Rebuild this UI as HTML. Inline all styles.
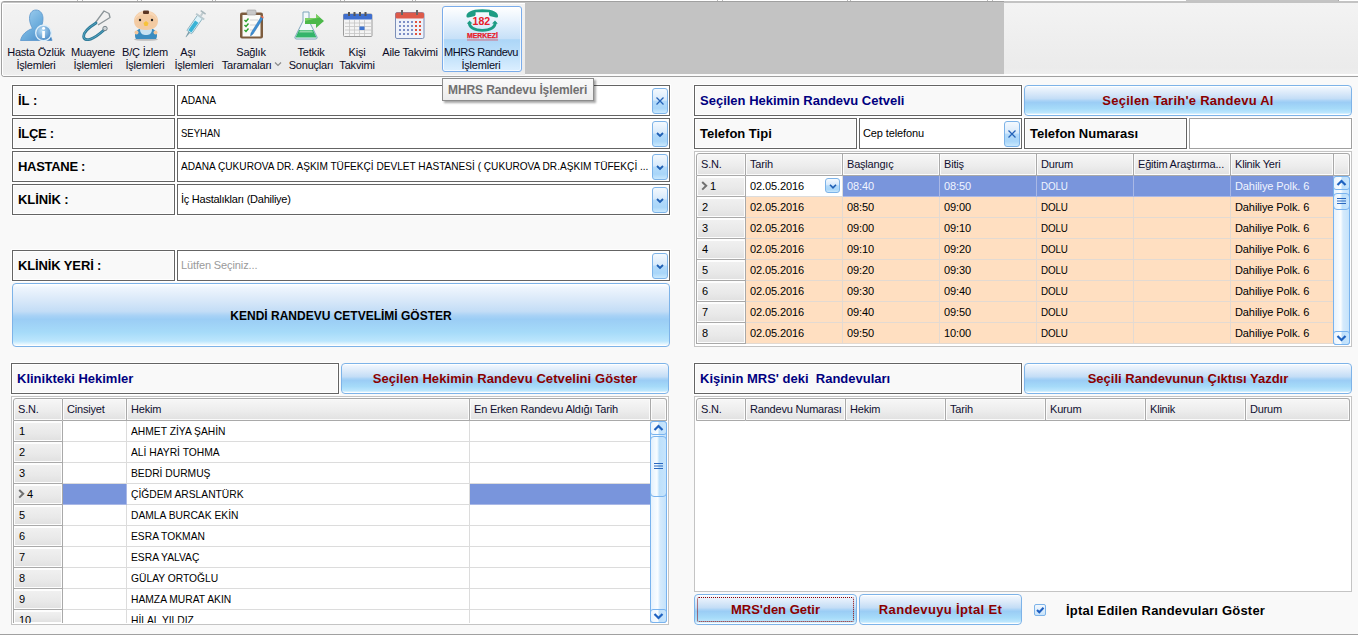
<!DOCTYPE html><html><head><meta charset="utf-8"><title>MHRS</title><style>
*{margin:0;padding:0;box-sizing:border-box}
html,body{width:1358px;height:636px;overflow:hidden;background:#f9f9f9;font-family:"Liberation Sans",sans-serif;font-size:11px;color:#000;position:relative}
.ab{position:absolute}
.t{position:absolute;white-space:nowrap;line-height:13px}
.lbl{position:absolute;background:#f9f9f9;border:1px solid #646464;box-shadow:0 0 0 1px #fff, inset 0 0 0 1px #fff}
.val{position:absolute;background:#fff;border:1px solid #646464;box-shadow:0 0 0 1px #fff}
.lt{position:absolute;font-weight:bold;font-size:13px;line-height:15px;white-space:nowrap;color:#000}
.vt{position:absolute;font-size:11px;line-height:13px;white-space:nowrap;color:#000;letter-spacing:-0.2px}
.btn{position:absolute;border:1px solid #7db3e8;border-radius:4px;
 background:linear-gradient(to bottom,#ffffff 0%,#eef5fd 6%,#dae9f9 25%,#c3ddf6 44%,#a8d2f6 51%,#9bcdf5 57%,#a6dbf9 78%,#bce6fd 92%,#e4f6fe 97%,#ffffff 100%);
 box-shadow:inset 0 1px 0 rgba(255,255,255,.8), inset 0 -1px 0 rgba(255,255,255,.8)}
.bt{position:absolute;left:0;right:0;text-align:center;font-weight:bold;font-size:13px;color:#8b0000;white-space:nowrap}
.sbtn{position:absolute;border:1px solid #7db3e8;border-radius:3px;
 background:linear-gradient(to bottom,#f4f9fe 0%,#d8eafb 45%,#b3dafa 52%,#a9d6f9 80%,#c9e8fd 100%)}
.grid{position:absolute;background:#fff;border:1px solid #c4c4c4;box-shadow:inset 0 0 0 1px #fff}
.hc{position:absolute;height:22px;padding:1px 1px 1px 1px;background:linear-gradient(to bottom,#f6f6f6 0%,#ececec 60%,#e2e2e2 100%) content-box,#fbfbfb;border-right:1px solid #a9a9a9;border-bottom:1px solid #a9a9a9}
.ht{position:absolute;left:4px;top:4px;font-size:11px;line-height:13px;color:#101030;white-space:nowrap;letter-spacing:-0.2px}
.rh{position:absolute;padding:2px 1px 1px 1px;background:linear-gradient(to bottom,#f0f0f0 0%,#e9e9e9 60%,#e1e1e1 100%) content-box,#fdfdfd;border-right:1px solid #a9a9a9;border-bottom:1px solid #a9a9a9}
.cell{position:absolute;border-right:1px solid #dcdcdc;border-bottom:1px solid #dcdcdc}
.ct{position:absolute;left:4px;top:4px;font-size:11px;line-height:13px;white-space:nowrap;color:#000;letter-spacing:-0.1px}
.rb{position:absolute;font-weight:bold;font-size:13px;color:#000080;white-space:nowrap}
</style></head><body>
<div class="ab" style="left:0;top:0;width:1358px;height:1px;background:#fff"></div>
<div class="ab" style="left:1px;top:1px;width:1370px;height:76px;border:1px solid #a0a0a0;border-radius:3px 0 0 3px;background:linear-gradient(to bottom,#f3f3f3 0%,#eeeeee 55%,#ebebeb 90%,#efefef 100%)"></div>
<div class="ab" style="left:3px;top:2px;width:1360px;height:1px;background:#c4c4c4"></div>
<div class="ab" style="left:3px;top:3px;width:1360px;height:1px;background:#fff"></div>
<div class="ab" style="left:2px;top:4px;width:1px;height:71px;background:#fff"></div>
<div class="ab" style="left:3px;top:75px;width:1360px;height:1px;background:#fbfbfb"></div>
<div class="ab" style="left:77px;top:0;width:1px;height:1px;background:#b8b8b8"></div>
<div class="ab" style="left:82px;top:0;width:1px;height:1px;background:#b8b8b8"></div>
<div class="ab" style="left:137px;top:0;width:1px;height:1px;background:#b8b8b8"></div>
<div class="ab" style="left:141px;top:0;width:1px;height:1px;background:#b8b8b8"></div>
<div class="ab" style="left:212px;top:0;width:1px;height:1px;background:#b8b8b8"></div>
<div class="ab" style="left:215px;top:0;width:1px;height:1px;background:#b8b8b8"></div>
<div class="ab" style="left:340px;top:0;width:1px;height:1px;background:#b8b8b8"></div>
<div class="ab" style="left:344px;top:0;width:1px;height:1px;background:#b8b8b8"></div>
<div class="ab" style="left:412px;top:0;width:1px;height:1px;background:#b8b8b8"></div>
<div class="ab" style="left:415px;top:0;width:1px;height:1px;background:#b8b8b8"></div>
<div class="ab" style="left:717px;top:0;width:1px;height:1px;background:#b8b8b8"></div>
<div class="ab" style="left:722px;top:0;width:1px;height:1px;background:#b8b8b8"></div>
<div class="ab" style="left:847px;top:0;width:1px;height:1px;background:#b8b8b8"></div>
<div class="ab" style="left:850px;top:0;width:1px;height:1px;background:#b8b8b8"></div>
<div class="ab" style="left:987px;top:0;width:1px;height:1px;background:#b8b8b8"></div>
<div class="ab" style="left:992px;top:0;width:1px;height:1px;background:#b8b8b8"></div>
<div class="ab" style="left:1190px;top:0;width:1px;height:1px;background:#b8b8b8"></div>
<div class="ab" style="left:1186px;top:0;width:152px;height:3px;background:#c4c4c4"></div>
<div class="ab" style="left:1338px;top:-2px;width:30px;height:4px;background:#fff;border:1px solid #a8a8a8"></div>
<div class="ab" style="left:525px;top:2px;width:479px;height:72px;background:#c3c3c3"></div>
<div class="ab" style="left:1004px;top:3px;width:354px;height:72px;background:linear-gradient(to bottom,#f3f3f3 0%,#eeeeee 55%,#ebebeb 90%,#efefef 100%)"></div>
<div class="ab" style="left:1004px;top:1px;width:354px;height:2px;background:#c3c3c3"></div>
<div class="ab" style="left:1004px;top:74px;width:354px;height:1px;background:#fff"></div>
<div class="ab" style="left:525px;top:74px;width:479px;height:1px;background:#fafafa"></div>
<div class="ab" style="left:442px;top:6px;width:80px;height:66px;border:1px solid #7aacea;border-radius:3px;background:linear-gradient(to bottom,#ffffff 0%,#e4f0fc 25%,#c6e0f8 50%,#acd6f7 51%,#bfe0fa 75%,#dcefff 100%);box-shadow:inset 0 0 0 1px rgba(255,255,255,.7)"></div>
<div class="t" style="left:-24px;top:46px;width:120px;text-align:center;color:#0a0a24;letter-spacing:-0.2px">Hasta Özlük</div>
<div class="t" style="left:-24px;top:59px;width:120px;text-align:center;color:#0a0a24;letter-spacing:-0.2px">İşlemleri</div>
<div class="t" style="left:33px;top:46px;width:120px;text-align:center;color:#0a0a24;letter-spacing:-0.2px">Muayene</div>
<div class="t" style="left:33px;top:59px;width:120px;text-align:center;color:#0a0a24;letter-spacing:-0.2px">İşlemleri</div>
<div class="t" style="left:85px;top:46px;width:120px;text-align:center;color:#0a0a24;letter-spacing:-0.2px">B/Ç İzlem</div>
<div class="t" style="left:85px;top:59px;width:120px;text-align:center;color:#0a0a24;letter-spacing:-0.2px">İşlemleri</div>
<div class="t" style="left:128px;top:46px;width:120px;text-align:center;color:#0a0a24;letter-spacing:-0.2px">Aşı</div>
<div class="t" style="left:134px;top:59px;width:120px;text-align:center;color:#0a0a24;letter-spacing:-0.2px">İşlemleri</div>
<div class="t" style="left:191px;top:46px;width:120px;text-align:center;color:#0a0a24;letter-spacing:-0.2px">Sağlık</div>
<div class="t" style="left:191px;top:59px;width:120px;text-align:center;color:#0a0a24;letter-spacing:-0.2px">Taramaları&nbsp;&nbsp;&nbsp;</div>
<svg class="ab" style="left:274px;top:61px" width="8" height="6"><path d="M1 1.5 L4 4.5 L7 1.5" stroke="#8a8a8a" stroke-width="1.2" fill="none"/></svg>
<div class="t" style="left:251px;top:46px;width:120px;text-align:center;color:#0a0a24;letter-spacing:-0.2px">Tetkik</div>
<div class="t" style="left:251px;top:59px;width:120px;text-align:center;color:#0a0a24;letter-spacing:-0.2px">Sonuçları</div>
<div class="t" style="left:297px;top:46px;width:120px;text-align:center;color:#0a0a24;letter-spacing:-0.2px">Kişi</div>
<div class="t" style="left:297px;top:59px;width:120px;text-align:center;color:#0a0a24;letter-spacing:-0.2px">Takvimi</div>
<div class="t" style="left:350px;top:46px;width:120px;text-align:center;color:#0a0a24;letter-spacing:-0.2px">Aile Takvimi</div>
<div class="t" style="left:421px;top:46px;width:120px;text-align:center;color:#0a0a24;letter-spacing:-0.45px">MHRS Randevu</div>
<div class="t" style="left:421px;top:59px;width:120px;text-align:center;color:#0a0a24;letter-spacing:-0.2px">İşlemleri</div>
<svg class="ab" style="left:19px;top:9px" width="34" height="33" viewBox="0 0 34 33">
<defs><linearGradient id="pg" x1="0" y1="0" x2="1" y2="1"><stop offset="0" stop-color="#a8d4f2"/><stop offset=".5" stop-color="#6eaedd"/><stop offset="1" stop-color="#3f7fbf"/></linearGradient>
<radialGradient id="ig" cx=".4" cy=".35" r=".75"><stop offset="0" stop-color="#b5dcf6"/><stop offset="1" stop-color="#3e80c0"/></radialGradient></defs>
<path d="M17 1 C12.5 1 10.5 5 10.5 9.5 C10.5 14 12.5 17.5 13.5 19.5 C8 21.5 3 25 1.5 31.5 L33 31.5 C32 26 28 22 21.5 19.5 C22.5 17.5 24 14 24 9.5 C24 5 21.5 1 17 1 Z" fill="url(#pg)" stroke="#5a96cc" stroke-width=".8"/>
<circle cx="24.5" cy="24" r="7.8" fill="url(#ig)" stroke="#dceefa" stroke-width="1.4"/>
<rect x="23.2" y="22" width="2.7" height="7" fill="#fff"/><circle cx="24.55" cy="19.3" r="1.5" fill="#fff"/>
</svg>
<svg class="ab" style="left:79px;top:9px" width="32" height="32" viewBox="0 0 32 32">
<path d="M16.5 13.5 L25 2 L30 4.5 L31 8.5 L19 16" fill="none" stroke="#8c9599" stroke-width="1.3" stroke-linejoin="round"/>
<path d="M17 14 C9 19 3 24 5 29 C7 32.5 14 31 25 21" fill="none" stroke="#2d7896" stroke-width="2.8" stroke-linecap="round"/>
<path d="M17 14 C9 19 3 24 5 29 C7 32.5 14 31 25 21" fill="none" stroke="#58aac6" stroke-width=".9" stroke-linecap="round"/>
<circle cx="26" cy="19.5" r="2.2" fill="#cdd3d6" stroke="#6e7c82" stroke-width=".9"/>
</svg>
<svg class="ab" style="left:132px;top:9px" width="28" height="32" viewBox="0 0 28 32">
<ellipse cx="14" cy="30.5" rx="12" ry="1.3" fill="#9a9a9a" opacity=".6"/>
<path d="M4 30 C2 27 3 22 7 20 L21 20 C25 22 26 27 24 30 Z" fill="#3a8cc0"/>
<path d="M8 20 L20 20 C20 25 17 26 14 26 C11 26 8 25 8 20Z" fill="#c6e2f2"/>
<circle cx="4.5" cy="23.5" r="2" fill="#f1c79d"/><circle cx="23.5" cy="23.5" r="2" fill="#f1c79d"/>
<path d="M14 2 C6 2 2 7 2 12 C2 18 7 21 14 21 C21 21 26 18 26 12 C26 7 22 2 14 2Z" fill="#f3cba3"/>
<path d="M14 2 C8 2 3 6 2.5 12 C5 7 9 5 14 5 C19 5 23 7 25.5 12 C25 6 20 2 14 2Z" fill="#f9dcbd" opacity=".7"/>
<rect x="11" y="1.5" width="6" height="3.5" rx="1" fill="#5a3422"/>
<circle cx="8" cy="11" r="1.2" fill="#222"/><circle cx="20" cy="11" r="1.2" fill="#222"/>
<path d="M11.5 14 L14 12 L16.5 14 L15.5 17 L12.5 17 Z" fill="#f7c23a"/>
</svg>
<svg class="ab" style="left:183px;top:9px" width="24" height="31" viewBox="0 0 24 31">
<g transform="rotate(35 12 15)">
<rect x="9" y="6" width="6" height="19" rx="1" fill="#dff3fa" stroke="#7fa9b8" stroke-width=".8"/>
<rect x="10" y="12" width="4" height="12" fill="#3ab3d6"/>
<rect x="7" y="5" width="10" height="2" fill="#b9c9cf"/>
<rect x="11" y="0" width="2" height="5" fill="#c0ccd0"/><rect x="9" y="0" width="6" height="1.5" fill="#aab8bd"/>
<path d="M11 25 L13 25 L12.3 31 L11.7 31Z" fill="#7ea0ac"/>
</g></svg>
<svg class="ab" style="left:239px;top:9px" width="26" height="31" viewBox="0 0 26 31">
<rect x="1" y="3.5" width="23" height="26" rx="2" fill="#7d5c3e"/>
<rect x="3.5" y="6" width="18" height="21.5" fill="#fbfbf8"/>
<rect x="8" y="1" width="9" height="5" rx="1" fill="#c9c9c9" stroke="#9a9a9a" stroke-width=".6"/>
<path d="M5.5 11 L7 12.5 L9.5 9.5 M5.5 16 L7 17.5 L9.5 14.5 M5.5 21 L7 22.5 L9.5 19.5" stroke="#2aa02a" stroke-width="1.4" fill="none"/>
<path d="M11 11 H19 M11 16 H17 M11 21 H15" stroke="#c8c8c8" stroke-width=".8"/>
<path d="M22 8 L12 24 L11.5 27 L14 25 L24 9.5Z" fill="#3d8fd6" stroke="#2f6ea6" stroke-width=".5"/>
<path d="M22 8 L24 9.5 L24.8 8 L22.8 6.6Z" fill="#e66a4a"/>
</svg>
<svg class="ab" style="left:294px;top:11px" width="31" height="29" viewBox="0 0 31 29">
<path d="M9 1 L15 1 L15 10 L23 26 C23.5 27.5 22.5 28 21 28 L3 28 C1.5 28 .5 27.5 1 26 L9 10 Z" fill="#f2f8fb" stroke="#7fa6bb" stroke-width="1"/>
<path d="M5 19 L19 19 L22.5 26.5 L1.5 26.5 Z" fill="#33b46a"/>
<path d="M6 19.5 L18 19.5 L19 21.5 L5 21.5Z" fill="#8fd8a8"/>
<path d="M11 7 L22 7 L22 3 L30 10 L22 17 L22 13 L11 13Z" fill="#4cb84a"/>
<path d="M11 7 L22 7 L22 3 L26 6.5 L11 10Z" fill="#8ad56a" opacity=".8"/>
</svg>
<svg class="ab" style="left:343px;top:12px" width="30" height="25" viewBox="0 0 30 25">
<rect x=".5" y="2" width="28.5" height="22.5" rx="1" fill="#f4f4f4" stroke="#9c9c9c" stroke-width="1"/>
<rect x=".5" y="2" width="28.5" height="5.5" rx="1" fill="#3f6fcf"/>
<g fill="#555"><rect x="5" y="0" width="2" height="4"/><rect x="10.5" y="0" width="2" height="4"/><rect x="16" y="0" width="2" height="4"/><rect x="21.5" y="0" width="2" height="4"/></g>
<g stroke="#c4c4c4" stroke-width=".8"><path d="M2 11H28M2 14.5H28M2 18H28M2 21.5H28M6.5 8V24M11.5 8V24M16.5 8V24M21.5 8V24"/></g>
<rect x="16.5" y="14.5" width="5" height="3.5" fill="#3f74d0"/>
</svg>
<svg class="ab" style="left:395px;top:10px" width="30" height="29" viewBox="0 0 30 29">
<rect x=".5" y="2.5" width="28.5" height="26" rx="1.5" fill="#eef2fa" stroke="#7c8fb8" stroke-width="1"/>
<rect x=".5" y="2.5" width="28.5" height="6" rx="1.5" fill="#dd5a4a"/>
<g fill="#666"><rect x="6" y="0" width="2" height="5"/><rect x="21" y="0" width="2" height="5"/></g>
<g fill="#7d8fc6">
<rect x="4" y="11" width="2" height="2"/><rect x="8" y="11" width="2" height="2"/><rect x="12" y="11" width="2" height="2"/><rect x="16" y="11" width="2" height="2"/>
<rect x="4" y="15" width="2" height="2"/><rect x="8" y="15" width="2" height="2"/><rect x="12" y="15" width="2" height="2"/><rect x="16" y="15" width="2" height="2"/>
<rect x="4" y="19" width="2" height="2"/><rect x="8" y="19" width="2" height="2"/><rect x="12" y="19" width="2" height="2"/><rect x="16" y="19" width="2" height="2"/>
<rect x="4" y="23" width="2" height="2"/><rect x="8" y="23" width="2" height="2"/><rect x="12" y="23" width="2" height="2"/><rect x="16" y="23" width="2" height="2"/></g>
<g fill="#e0533f"><rect x="20" y="11" width="2" height="2"/><rect x="24" y="11" width="2" height="2"/><rect x="20" y="15" width="2" height="2"/><rect x="24" y="15" width="2" height="2"/><rect x="20" y="19" width="2" height="2"/><rect x="24" y="19" width="2" height="2"/><rect x="20" y="23" width="2" height="2"/><rect x="24" y="23" width="2" height="2"/></g>
</svg>
<svg class="ab" style="left:462px;top:6px" width="40" height="38" viewBox="0 0 40 38">
<path d="M4.5 10.5 C4 6.5 9 3.2 20.3 3.2 C31.5 3.2 36.5 6.5 36 10.5 C36 11.5 35 11.8 34 11.5 L28.5 10.2 C27.5 10 27 9.2 27 8.5 L27 6.2 L13.6 6.2 L13.6 8.5 C13.6 9.2 13 10 12 10.2 L6.5 11.5 C5.5 11.8 4.6 11.5 4.5 10.5Z" fill="#1d9c84"/>
<path d="M7.2 16.5 C7.5 22 12 24.3 20.3 24.3 C28.5 24.3 33 22 33.3 16.5" fill="none" stroke="#1d9c84" stroke-width="2.8"/>
<path d="M4.8 17.8 L7.5 14.6 L10.5 17.5Z M30 17.5 L33 14.6 L35.8 17.8Z" fill="#1d9c84"/>
<text x="10.6" y="18.9" font-family="Liberation Sans" font-weight="bold" font-size="10.6" fill="#e8202a" textLength="17.6" lengthAdjust="spacingAndGlyphs">182</text>
<text x="5" y="31.8" font-family="Liberation Sans" font-weight="bold" font-size="6.3" fill="#e8202a" stroke="#e8202a" stroke-width=".25" textLength="31" lengthAdjust="spacingAndGlyphs">MERKEZİ</text>
<rect x="5" y="33.3" width="31" height="1.3" fill="#e8202a" opacity=".45"/>
</svg>
<div class="ab" style="left:442px;top:78px;width:152px;height:23px;background:linear-gradient(to bottom,#fafafa,#ececec);border:1px solid #8c8c8c;box-shadow:2px 2px 2px rgba(0,0,0,.35);z-index:5"></div>
<div class="t" style="left:448px;top:83px;font-weight:bold;font-size:12px;line-height:14px;color:#707070;z-index:6;letter-spacing:-0.1px">MHRS Randevu İşlemleri</div>
<div class="lbl" style="left:12px;top:85px;width:163px;height:31px"></div>
<div class="lt" style="left:18px;top:93px;letter-spacing:0px">İL :</div>
<div class="val" style="left:177px;top:85px;width:493px;height:31px"></div>
<div class="vt" style="left:181px;top:94px;letter-spacing:0;transform:scaleX(0.923);transform-origin:0 0">ADANA</div>
<div class="sbtn" style="left:652px;top:88px;width:16px;height:26px"></div>
<svg class="ab" style="left:655px;top:96px" width="10" height="10"><path d="M1.5 1.5 L8.5 8.5 M8.5 1.5 L1.5 8.5" stroke="#2563b8" stroke-width="1.3"/></svg>
<div class="lbl" style="left:12px;top:118px;width:163px;height:31px"></div>
<div class="lt" style="left:18px;top:126px;letter-spacing:-0.3px">İLÇE :</div>
<div class="val" style="left:177px;top:118px;width:493px;height:31px"></div>
<div class="vt" style="left:181px;top:127px;letter-spacing:0;transform:scaleX(0.868);transform-origin:0 0">SEYHAN</div>
<div class="sbtn" style="left:652px;top:121px;width:16px;height:26px"></div>
<svg class="ab" style="left:656px;top:132px" width="8" height="6"><path d="M1 1 L4 4 L7 1" stroke="#1f5fb4" stroke-width="1.8" fill="none"/></svg>
<div class="lbl" style="left:12px;top:151px;width:163px;height:31px"></div>
<div class="lt" style="left:18px;top:159px;letter-spacing:-0.3px">HASTANE :</div>
<div class="val" style="left:177px;top:151px;width:493px;height:31px"></div>
<div class="vt" style="left:181px;top:160px;letter-spacing:0;transform:scaleX(0.918);transform-origin:0 0">ADANA ÇUKUROVA DR. AŞKIM TÜFEKÇİ DEVLET HASTANESİ ( ÇUKUROVA DR.AŞKIM TÜFEKÇİ ...</div>
<div class="sbtn" style="left:652px;top:154px;width:16px;height:26px"></div>
<svg class="ab" style="left:656px;top:165px" width="8" height="6"><path d="M1 1 L4 4 L7 1" stroke="#1f5fb4" stroke-width="1.8" fill="none"/></svg>
<div class="lbl" style="left:12px;top:184px;width:163px;height:31px"></div>
<div class="lt" style="left:18px;top:192px;letter-spacing:-0.1px">KLİNİK :</div>
<div class="val" style="left:177px;top:184px;width:493px;height:31px"></div>
<div class="vt" style="left:181px;top:193px;letter-spacing:-0.25px">İç Hastalıkları (Dahiliye)</div>
<div class="sbtn" style="left:652px;top:187px;width:16px;height:26px"></div>
<svg class="ab" style="left:656px;top:198px" width="8" height="6"><path d="M1 1 L4 4 L7 1" stroke="#1f5fb4" stroke-width="1.8" fill="none"/></svg>
<div class="lbl" style="left:12px;top:250px;width:163px;height:31px"></div>
<div class="lt" style="left:18px;top:258px;letter-spacing:-0.13px">KLİNİK YERİ :</div>
<div class="val" style="left:177px;top:250px;width:493px;height:31px"></div>
<div class="vt" style="left:181px;top:259px;letter-spacing:-0.11px"><span style="color:#9a9a9a">Lütfen Seçiniz...</span></div>
<div class="sbtn" style="left:652px;top:253px;width:16px;height:26px"></div>
<svg class="ab" style="left:656px;top:264px" width="8" height="6"><path d="M1 1 L4 4 L7 1" stroke="#1f5fb4" stroke-width="1.8" fill="none"/></svg>
<div class="btn" style="left:12px;top:283px;width:658px;height:64px"></div>
<div class="bt" style="left:12px;width:658px;top:309px;color:#000;font-size:12px">KENDİ RANDEVU CETVELİMİ GÖSTER</div>
<div class="lbl" style="left:11px;top:363px;width:328px;height:31px"></div>
<div class="rb" style="left:17px;top:371px">Klinikteki Hekimler</div>
<div class="btn" style="left:341px;top:363px;width:328px;height:31px"></div>
<div class="bt" style="left:341px;width:328px;top:371px;letter-spacing:0.08px">Seçilen Hekimin Randevu Cetvelini Göster</div>
<div class="lbl" style="left:694px;top:85px;width:328px;height:31px"></div>
<div class="rb" style="left:700px;top:93px">Seçilen Hekimin Randevu Cetveli</div>
<div class="btn" style="left:1024px;top:85px;width:328px;height:31px"></div>
<div class="bt" style="left:1024px;width:328px;top:93px;letter-spacing:0.25px">Seçilen Tarih'e Randevu Al</div>
<div class="lbl" style="left:694px;top:118px;width:163px;height:31px"></div>
<div class="lt" style="left:700px;top:126px">Telefon Tipi</div>
<div class="val" style="left:859px;top:118px;width:163px;height:31px"></div>
<div class="vt" style="left:863px;top:127px;letter-spacing:-0.12px">Cep telefonu</div>
<div class="sbtn" style="left:1004px;top:121px;width:16px;height:26px"></div>
<svg class="ab" style="left:1007px;top:129px" width="10" height="10"><path d="M1.5 1.5 L8.5 8.5 M8.5 1.5 L1.5 8.5" stroke="#2563b8" stroke-width="1.3"/></svg>
<div class="lbl" style="left:1024px;top:118px;width:163px;height:31px"></div>
<div class="lt" style="left:1030px;top:126px">Telefon Numarası</div>
<div class="val" style="left:1189px;top:118px;width:163px;height:31px;border-color:#a0a0a0"></div>
<div class="lbl" style="left:694px;top:363px;width:328px;height:31px"></div>
<div class="rb" style="left:700px;top:371px">Kişinin MRS' deki&nbsp; Randevuları</div>
<div class="btn" style="left:1024px;top:363px;width:328px;height:31px"></div>
<div class="bt" style="left:1024px;width:328px;top:371px">Seçili Randevunun Çıktısı Yazdır</div>
<div class="btn" style="left:694px;top:594px;width:163px;height:31px"></div>
<div class="ab" style="left:697px;top:597px;width:157px;height:25px;border:1px dotted #8b0000;border-radius:2px"></div>
<div class="bt" style="left:694px;width:163px;top:602px">MRS'den Getir</div>
<div class="btn" style="left:859px;top:594px;width:163px;height:31px"></div>
<div class="bt" style="left:859px;width:163px;top:602px;letter-spacing:0.35px">Randevuyu İptal Et</div>
<div class="ab" style="left:1034px;top:604px;width:12px;height:12px;border:1px solid #7db3e8;border-radius:2px;background:linear-gradient(to bottom,#f2f8fe,#c9e4fb)"></div>
<svg class="ab" style="left:1035px;top:605px" width="10" height="10"><path d="M2 5 L4.3 7.3 L8.5 2.8" stroke="#1f5fc0" stroke-width="2" fill="none"/></svg>
<div class="lt" style="left:1066px;top:603px;font-size:13px;letter-spacing:0.2px">İptal Edilen Randevuları Göster</div>
<div class="ab" style="left:0;top:634px;width:1358px;height:1px;background:#a0a0a0"></div>
<div class="ab" style="left:0;top:635px;width:1358px;height:1px;background:#fff"></div>
<div class="grid" style="left:11px;top:396px;width:658px;height:229px"></div>
<div class="hc" style="left:13px;width:50px;border-left:1px solid #a9a9a9;border-top-left-radius:3px;top:398px;height:23px;border-top:1px solid #a9a9a9"><div class="ht">S.N.</div></div>
<div class="hc" style="left:63px;width:64px;top:398px;height:23px;border-top:1px solid #a9a9a9"><div class="ht">Cinsiyet</div></div>
<div class="hc" style="left:127px;width:343px;top:398px;height:23px;border-top:1px solid #a9a9a9"><div class="ht">Hekim</div></div>
<div class="hc" style="left:470px;width:181px;top:398px;height:23px;border-top:1px solid #a9a9a9"><div class="ht">En Erken Randevu Aldığı Tarih</div></div>
<div class="hc" style="left:651px;width:16px;border-top-right-radius:3px;top:398px;height:23px;border-top:1px solid #a9a9a9"><div class="ht"></div></div>
<div class="rh" style="left:13px;width:50px;border-left:1px solid #a9a9a9;top:421px;height:21px;overflow:hidden;"><div class="ct" style="left:5px">1</div></div>
<div class="cell" style="left:63px;width:64px;top:421px;height:21px;background:#fff;border-color:#dcdcdc;overflow:hidden;"><div class="ct" style="color:#000"></div></div>
<div class="cell" style="left:127px;width:343px;top:421px;height:21px;background:#fff;border-color:#dcdcdc;overflow:hidden;"><div class="ct" style="color:#000"><span style="display:inline-block;letter-spacing:0;transform:scaleX(0.935);transform-origin:0 0">AHMET ZİYA ŞAHİN</span></div></div>
<div class="cell" style="left:470px;width:181px;top:421px;height:21px;background:#fff;border-color:#dcdcdc;overflow:hidden;"><div class="ct" style="color:#000"></div></div>
<div class="rh" style="left:13px;width:50px;border-left:1px solid #a9a9a9;top:442px;height:21px;overflow:hidden;"><div class="ct" style="left:5px">2</div></div>
<div class="cell" style="left:63px;width:64px;top:442px;height:21px;background:#fff;border-color:#dcdcdc;overflow:hidden;"><div class="ct" style="color:#000"></div></div>
<div class="cell" style="left:127px;width:343px;top:442px;height:21px;background:#fff;border-color:#dcdcdc;overflow:hidden;"><div class="ct" style="color:#000"><span style="display:inline-block;letter-spacing:0;transform:scaleX(0.935);transform-origin:0 0">ALİ HAYRİ TOHMA</span></div></div>
<div class="cell" style="left:470px;width:181px;top:442px;height:21px;background:#fff;border-color:#dcdcdc;overflow:hidden;"><div class="ct" style="color:#000"></div></div>
<div class="rh" style="left:13px;width:50px;border-left:1px solid #a9a9a9;top:463px;height:21px;overflow:hidden;"><div class="ct" style="left:5px">3</div></div>
<div class="cell" style="left:63px;width:64px;top:463px;height:21px;background:#fff;border-color:#dcdcdc;overflow:hidden;"><div class="ct" style="color:#000"></div></div>
<div class="cell" style="left:127px;width:343px;top:463px;height:21px;background:#fff;border-color:#dcdcdc;overflow:hidden;"><div class="ct" style="color:#000"><span style="display:inline-block;letter-spacing:0;transform:scaleX(0.935);transform-origin:0 0">BEDRİ DURMUŞ</span></div></div>
<div class="cell" style="left:470px;width:181px;top:463px;height:21px;background:#fff;border-color:#dcdcdc;overflow:hidden;"><div class="ct" style="color:#000"></div></div>
<div class="rh" style="left:13px;width:50px;border-left:1px solid #a9a9a9;top:484px;height:21px;overflow:hidden;"><svg class="ab" style="left:4px;top:5px" width="8" height="10"><path d="M1.2 1 L5.2 4.8 L1.2 8.6" stroke="#707070" stroke-width="2" fill="none"/></svg><div class="ct" style="left:13px">4</div></div>
<div class="cell" style="left:63px;width:64px;top:484px;height:21px;background:#7995dc;border-color:#a9b8e6;overflow:hidden;"><div class="ct" style="color:#f0f4ff"></div></div>
<div class="cell" style="left:127px;width:343px;top:484px;height:21px;background:#fff;border-color:#dcdcdc;overflow:hidden;"><div class="ct" style="color:#000"><span style="display:inline-block;letter-spacing:0;transform:scaleX(0.935);transform-origin:0 0">ÇİĞDEM ARSLANTÜRK</span></div></div>
<div class="cell" style="left:470px;width:181px;top:484px;height:21px;background:#7995dc;border-color:#a9b8e6;overflow:hidden;"><div class="ct" style="color:#f0f4ff"></div></div>
<div class="rh" style="left:13px;width:50px;border-left:1px solid #a9a9a9;top:505px;height:21px;overflow:hidden;"><div class="ct" style="left:5px">5</div></div>
<div class="cell" style="left:63px;width:64px;top:505px;height:21px;background:#fff;border-color:#dcdcdc;overflow:hidden;"><div class="ct" style="color:#000"></div></div>
<div class="cell" style="left:127px;width:343px;top:505px;height:21px;background:#fff;border-color:#dcdcdc;overflow:hidden;"><div class="ct" style="color:#000"><span style="display:inline-block;letter-spacing:0;transform:scaleX(0.935);transform-origin:0 0">DAMLA BURCAK EKİN</span></div></div>
<div class="cell" style="left:470px;width:181px;top:505px;height:21px;background:#fff;border-color:#dcdcdc;overflow:hidden;"><div class="ct" style="color:#000"></div></div>
<div class="rh" style="left:13px;width:50px;border-left:1px solid #a9a9a9;top:526px;height:21px;overflow:hidden;"><div class="ct" style="left:5px">6</div></div>
<div class="cell" style="left:63px;width:64px;top:526px;height:21px;background:#fff;border-color:#dcdcdc;overflow:hidden;"><div class="ct" style="color:#000"></div></div>
<div class="cell" style="left:127px;width:343px;top:526px;height:21px;background:#fff;border-color:#dcdcdc;overflow:hidden;"><div class="ct" style="color:#000"><span style="display:inline-block;letter-spacing:0;transform:scaleX(0.935);transform-origin:0 0">ESRA TOKMAN</span></div></div>
<div class="cell" style="left:470px;width:181px;top:526px;height:21px;background:#fff;border-color:#dcdcdc;overflow:hidden;"><div class="ct" style="color:#000"></div></div>
<div class="rh" style="left:13px;width:50px;border-left:1px solid #a9a9a9;top:547px;height:21px;overflow:hidden;"><div class="ct" style="left:5px">7</div></div>
<div class="cell" style="left:63px;width:64px;top:547px;height:21px;background:#fff;border-color:#dcdcdc;overflow:hidden;"><div class="ct" style="color:#000"></div></div>
<div class="cell" style="left:127px;width:343px;top:547px;height:21px;background:#fff;border-color:#dcdcdc;overflow:hidden;"><div class="ct" style="color:#000"><span style="display:inline-block;letter-spacing:0;transform:scaleX(0.935);transform-origin:0 0">ESRA YALVAÇ</span></div></div>
<div class="cell" style="left:470px;width:181px;top:547px;height:21px;background:#fff;border-color:#dcdcdc;overflow:hidden;"><div class="ct" style="color:#000"></div></div>
<div class="rh" style="left:13px;width:50px;border-left:1px solid #a9a9a9;top:568px;height:21px;overflow:hidden;"><div class="ct" style="left:5px">8</div></div>
<div class="cell" style="left:63px;width:64px;top:568px;height:21px;background:#fff;border-color:#dcdcdc;overflow:hidden;"><div class="ct" style="color:#000"></div></div>
<div class="cell" style="left:127px;width:343px;top:568px;height:21px;background:#fff;border-color:#dcdcdc;overflow:hidden;"><div class="ct" style="color:#000"><span style="display:inline-block;letter-spacing:0;transform:scaleX(0.935);transform-origin:0 0">GÜLAY ORTOĞLU</span></div></div>
<div class="cell" style="left:470px;width:181px;top:568px;height:21px;background:#fff;border-color:#dcdcdc;overflow:hidden;"><div class="ct" style="color:#000"></div></div>
<div class="rh" style="left:13px;width:50px;border-left:1px solid #a9a9a9;top:589px;height:21px;overflow:hidden;"><div class="ct" style="left:5px">9</div></div>
<div class="cell" style="left:63px;width:64px;top:589px;height:21px;background:#fff;border-color:#dcdcdc;overflow:hidden;"><div class="ct" style="color:#000"></div></div>
<div class="cell" style="left:127px;width:343px;top:589px;height:21px;background:#fff;border-color:#dcdcdc;overflow:hidden;"><div class="ct" style="color:#000"><span style="display:inline-block;letter-spacing:0;transform:scaleX(0.935);transform-origin:0 0">HAMZA MURAT AKIN</span></div></div>
<div class="cell" style="left:470px;width:181px;top:589px;height:21px;background:#fff;border-color:#dcdcdc;overflow:hidden;"><div class="ct" style="color:#000"></div></div>
<div class="rh" style="left:13px;width:50px;border-left:1px solid #a9a9a9;top:610px;height:13px;overflow:hidden;border-bottom:0;"><div class="ct" style="left:5px">10</div></div>
<div class="cell" style="left:63px;width:64px;top:610px;height:13px;background:#fff;border-color:#dcdcdc;overflow:hidden;border-bottom:0;"><div class="ct" style="color:#000"></div></div>
<div class="cell" style="left:127px;width:343px;top:610px;height:13px;background:#fff;border-color:#dcdcdc;overflow:hidden;border-bottom:0;"><div class="ct" style="color:#000"><span style="display:inline-block;letter-spacing:0;transform:scaleX(0.935);transform-origin:0 0">HİLAL YILDIZ</span></div></div>
<div class="cell" style="left:470px;width:181px;top:610px;height:13px;background:#fff;border-color:#dcdcdc;overflow:hidden;border-bottom:0;"><div class="ct" style="color:#000"></div></div>
<div class="ab" style="left:650px;top:421px;width:17px;height:202px;border:1px solid #79b3ee;border-radius:3px;background:linear-gradient(to right,#e6f2fd,#fafdff 45%,#d5eafc 60%,#c5e3fb)"></div>
<div class="ab" style="left:650px;top:421px;width:17px;height:14px;border:1px solid #79b3ee;border-radius:3px;background:linear-gradient(to right,#eaf4fe,#fafdff 45%,#bfe0fb 55%,#c8e5fc)"></div>
<svg class="ab" style="left:653px;top:424px" width="11" height="8"><path d="M1.5 6 L5.5 2 L9.5 6" stroke="#1f62c0" stroke-width="2.2" fill="none"/></svg>
<div class="ab" style="left:650px;top:609px;width:17px;height:14px;border:1px solid #79b3ee;border-radius:3px;background:linear-gradient(to right,#eaf4fe,#fafdff 45%,#bfe0fb 55%,#c8e5fc)"></div>
<svg class="ab" style="left:653px;top:612px" width="11" height="8"><path d="M1.5 2 L5.5 6 L9.5 2" stroke="#1f62c0" stroke-width="2.2" fill="none"/></svg>
<div class="ab" style="left:650px;top:436px;width:17px;height:61px;border:1px solid #79b3ee;border-radius:4px;background:linear-gradient(to right,#e2f0fd,#f8fcff 40%,#bde0fb 55%,#c6e4fc)"></div>
<svg class="ab" style="left:654px;top:462px" width="9" height="8"><path d="M0 1.5H9M0 4H9M0 6.5H9" stroke="#2a68c0" stroke-width="1.1"/></svg>
<div class="grid" style="left:694px;top:151px;width:658px;height:196px"></div>
<div class="hc" style="left:696px;width:50px;border-left:1px solid #a9a9a9;border-top-left-radius:3px;top:153px;height:23px;border-top:1px solid #a9a9a9"><div class="ht">S.N.</div></div>
<div class="hc" style="left:746px;width:97px;top:153px;height:23px;border-top:1px solid #a9a9a9"><div class="ht">Tarih</div></div>
<div class="hc" style="left:843px;width:97px;top:153px;height:23px;border-top:1px solid #a9a9a9"><div class="ht">Başlangıç</div></div>
<div class="hc" style="left:940px;width:97px;top:153px;height:23px;border-top:1px solid #a9a9a9"><div class="ht">Bitiş</div></div>
<div class="hc" style="left:1037px;width:97px;top:153px;height:23px;border-top:1px solid #a9a9a9"><div class="ht">Durum</div></div>
<div class="hc" style="left:1134px;width:97px;top:153px;height:23px;border-top:1px solid #a9a9a9"><div class="ht">Eğitim Araştırma...</div></div>
<div class="hc" style="left:1231px;width:103px;top:153px;height:23px;border-top:1px solid #a9a9a9"><div class="ht">Klinik Yeri</div></div>
<div class="hc" style="left:1334px;width:16px;border-top-right-radius:3px;top:153px;height:23px;border-top:1px solid #a9a9a9"><div class="ht"></div></div>
<div class="rh" style="left:696px;width:50px;border-left:1px solid #a9a9a9;top:176px;height:21px;overflow:hidden;"><svg class="ab" style="left:4px;top:5px" width="8" height="10"><path d="M1.2 1 L5.2 4.8 L1.2 8.6" stroke="#707070" stroke-width="2" fill="none"/></svg><div class="ct" style="left:13px">1</div></div>
<div class="cell" style="left:746px;width:97px;top:176px;height:21px;background:#fff;border-color:#dcdcdc;overflow:hidden;"><div class="ct" style="color:#000">02.05.2016</div><div class="sbtn" style="left:79px;top:2px;width:15px;height:15px;border-radius:3px"></div><svg class="ab" style="left:83px;top:8px" width="8" height="5"><path d="M1 .8 L4 3.8 L7 .8" stroke="#1f5fb4" stroke-width="1.6" fill="none"/></svg></div>
<div class="cell" style="left:843px;width:97px;top:176px;height:21px;background:#7995dc;border-color:#a9b8e6;overflow:hidden;"><div class="ct" style="color:#f0f4ff">08:40</div></div>
<div class="cell" style="left:940px;width:97px;top:176px;height:21px;background:#7995dc;border-color:#a9b8e6;overflow:hidden;"><div class="ct" style="color:#f0f4ff">08:50</div></div>
<div class="cell" style="left:1037px;width:97px;top:176px;height:21px;background:#7995dc;border-color:#a9b8e6;overflow:hidden;"><div class="ct" style="color:#f0f4ff"><span style="display:inline-block;transform:scaleX(0.89);transform-origin:0 0">DOLU</span></div></div>
<div class="cell" style="left:1134px;width:97px;top:176px;height:21px;background:#7995dc;border-color:#a9b8e6;overflow:hidden;"><div class="ct" style="color:#f0f4ff"></div></div>
<div class="cell" style="left:1231px;width:103px;top:176px;height:21px;background:#7995dc;border-color:#a9b8e6;overflow:hidden;"><div class="ct" style="color:#f0f4ff">Dahiliye Polk. 6</div></div>
<div class="rh" style="left:696px;width:50px;border-left:1px solid #a9a9a9;top:197px;height:21px;overflow:hidden;"><div class="ct" style="left:5px">2</div></div>
<div class="cell" style="left:746px;width:97px;top:197px;height:21px;background:#ffdfc1;border-color:#e3dad2;overflow:hidden;"><div class="ct" style="color:#000">02.05.2016</div></div>
<div class="cell" style="left:843px;width:97px;top:197px;height:21px;background:#ffdfc1;border-color:#e3dad2;overflow:hidden;"><div class="ct" style="color:#000">08:50</div></div>
<div class="cell" style="left:940px;width:97px;top:197px;height:21px;background:#ffdfc1;border-color:#e3dad2;overflow:hidden;"><div class="ct" style="color:#000">09:00</div></div>
<div class="cell" style="left:1037px;width:97px;top:197px;height:21px;background:#ffdfc1;border-color:#e3dad2;overflow:hidden;"><div class="ct" style="color:#000"><span style="display:inline-block;transform:scaleX(0.89);transform-origin:0 0">DOLU</span></div></div>
<div class="cell" style="left:1134px;width:97px;top:197px;height:21px;background:#ffdfc1;border-color:#e3dad2;overflow:hidden;"><div class="ct" style="color:#000"></div></div>
<div class="cell" style="left:1231px;width:103px;top:197px;height:21px;background:#ffdfc1;border-color:#e3dad2;overflow:hidden;"><div class="ct" style="color:#000">Dahiliye Polk. 6</div></div>
<div class="rh" style="left:696px;width:50px;border-left:1px solid #a9a9a9;top:218px;height:21px;overflow:hidden;"><div class="ct" style="left:5px">3</div></div>
<div class="cell" style="left:746px;width:97px;top:218px;height:21px;background:#ffdfc1;border-color:#e3dad2;overflow:hidden;"><div class="ct" style="color:#000">02.05.2016</div></div>
<div class="cell" style="left:843px;width:97px;top:218px;height:21px;background:#ffdfc1;border-color:#e3dad2;overflow:hidden;"><div class="ct" style="color:#000">09:00</div></div>
<div class="cell" style="left:940px;width:97px;top:218px;height:21px;background:#ffdfc1;border-color:#e3dad2;overflow:hidden;"><div class="ct" style="color:#000">09:10</div></div>
<div class="cell" style="left:1037px;width:97px;top:218px;height:21px;background:#ffdfc1;border-color:#e3dad2;overflow:hidden;"><div class="ct" style="color:#000"><span style="display:inline-block;transform:scaleX(0.89);transform-origin:0 0">DOLU</span></div></div>
<div class="cell" style="left:1134px;width:97px;top:218px;height:21px;background:#ffdfc1;border-color:#e3dad2;overflow:hidden;"><div class="ct" style="color:#000"></div></div>
<div class="cell" style="left:1231px;width:103px;top:218px;height:21px;background:#ffdfc1;border-color:#e3dad2;overflow:hidden;"><div class="ct" style="color:#000">Dahiliye Polk. 6</div></div>
<div class="rh" style="left:696px;width:50px;border-left:1px solid #a9a9a9;top:239px;height:21px;overflow:hidden;"><div class="ct" style="left:5px">4</div></div>
<div class="cell" style="left:746px;width:97px;top:239px;height:21px;background:#ffdfc1;border-color:#e3dad2;overflow:hidden;"><div class="ct" style="color:#000">02.05.2016</div></div>
<div class="cell" style="left:843px;width:97px;top:239px;height:21px;background:#ffdfc1;border-color:#e3dad2;overflow:hidden;"><div class="ct" style="color:#000">09:10</div></div>
<div class="cell" style="left:940px;width:97px;top:239px;height:21px;background:#ffdfc1;border-color:#e3dad2;overflow:hidden;"><div class="ct" style="color:#000">09:20</div></div>
<div class="cell" style="left:1037px;width:97px;top:239px;height:21px;background:#ffdfc1;border-color:#e3dad2;overflow:hidden;"><div class="ct" style="color:#000"><span style="display:inline-block;transform:scaleX(0.89);transform-origin:0 0">DOLU</span></div></div>
<div class="cell" style="left:1134px;width:97px;top:239px;height:21px;background:#ffdfc1;border-color:#e3dad2;overflow:hidden;"><div class="ct" style="color:#000"></div></div>
<div class="cell" style="left:1231px;width:103px;top:239px;height:21px;background:#ffdfc1;border-color:#e3dad2;overflow:hidden;"><div class="ct" style="color:#000">Dahiliye Polk. 6</div></div>
<div class="rh" style="left:696px;width:50px;border-left:1px solid #a9a9a9;top:260px;height:21px;overflow:hidden;"><div class="ct" style="left:5px">5</div></div>
<div class="cell" style="left:746px;width:97px;top:260px;height:21px;background:#ffdfc1;border-color:#e3dad2;overflow:hidden;"><div class="ct" style="color:#000">02.05.2016</div></div>
<div class="cell" style="left:843px;width:97px;top:260px;height:21px;background:#ffdfc1;border-color:#e3dad2;overflow:hidden;"><div class="ct" style="color:#000">09:20</div></div>
<div class="cell" style="left:940px;width:97px;top:260px;height:21px;background:#ffdfc1;border-color:#e3dad2;overflow:hidden;"><div class="ct" style="color:#000">09:30</div></div>
<div class="cell" style="left:1037px;width:97px;top:260px;height:21px;background:#ffdfc1;border-color:#e3dad2;overflow:hidden;"><div class="ct" style="color:#000"><span style="display:inline-block;transform:scaleX(0.89);transform-origin:0 0">DOLU</span></div></div>
<div class="cell" style="left:1134px;width:97px;top:260px;height:21px;background:#ffdfc1;border-color:#e3dad2;overflow:hidden;"><div class="ct" style="color:#000"></div></div>
<div class="cell" style="left:1231px;width:103px;top:260px;height:21px;background:#ffdfc1;border-color:#e3dad2;overflow:hidden;"><div class="ct" style="color:#000">Dahiliye Polk. 6</div></div>
<div class="rh" style="left:696px;width:50px;border-left:1px solid #a9a9a9;top:281px;height:21px;overflow:hidden;"><div class="ct" style="left:5px">6</div></div>
<div class="cell" style="left:746px;width:97px;top:281px;height:21px;background:#ffdfc1;border-color:#e3dad2;overflow:hidden;"><div class="ct" style="color:#000">02.05.2016</div></div>
<div class="cell" style="left:843px;width:97px;top:281px;height:21px;background:#ffdfc1;border-color:#e3dad2;overflow:hidden;"><div class="ct" style="color:#000">09:30</div></div>
<div class="cell" style="left:940px;width:97px;top:281px;height:21px;background:#ffdfc1;border-color:#e3dad2;overflow:hidden;"><div class="ct" style="color:#000">09:40</div></div>
<div class="cell" style="left:1037px;width:97px;top:281px;height:21px;background:#ffdfc1;border-color:#e3dad2;overflow:hidden;"><div class="ct" style="color:#000"><span style="display:inline-block;transform:scaleX(0.89);transform-origin:0 0">DOLU</span></div></div>
<div class="cell" style="left:1134px;width:97px;top:281px;height:21px;background:#ffdfc1;border-color:#e3dad2;overflow:hidden;"><div class="ct" style="color:#000"></div></div>
<div class="cell" style="left:1231px;width:103px;top:281px;height:21px;background:#ffdfc1;border-color:#e3dad2;overflow:hidden;"><div class="ct" style="color:#000">Dahiliye Polk. 6</div></div>
<div class="rh" style="left:696px;width:50px;border-left:1px solid #a9a9a9;top:302px;height:21px;overflow:hidden;"><div class="ct" style="left:5px">7</div></div>
<div class="cell" style="left:746px;width:97px;top:302px;height:21px;background:#ffdfc1;border-color:#e3dad2;overflow:hidden;"><div class="ct" style="color:#000">02.05.2016</div></div>
<div class="cell" style="left:843px;width:97px;top:302px;height:21px;background:#ffdfc1;border-color:#e3dad2;overflow:hidden;"><div class="ct" style="color:#000">09:40</div></div>
<div class="cell" style="left:940px;width:97px;top:302px;height:21px;background:#ffdfc1;border-color:#e3dad2;overflow:hidden;"><div class="ct" style="color:#000">09:50</div></div>
<div class="cell" style="left:1037px;width:97px;top:302px;height:21px;background:#ffdfc1;border-color:#e3dad2;overflow:hidden;"><div class="ct" style="color:#000"><span style="display:inline-block;transform:scaleX(0.89);transform-origin:0 0">DOLU</span></div></div>
<div class="cell" style="left:1134px;width:97px;top:302px;height:21px;background:#ffdfc1;border-color:#e3dad2;overflow:hidden;"><div class="ct" style="color:#000"></div></div>
<div class="cell" style="left:1231px;width:103px;top:302px;height:21px;background:#ffdfc1;border-color:#e3dad2;overflow:hidden;"><div class="ct" style="color:#000">Dahiliye Polk. 6</div></div>
<div class="rh" style="left:696px;width:50px;border-left:1px solid #a9a9a9;top:323px;height:21px;overflow:hidden;"><div class="ct" style="left:5px">8</div></div>
<div class="cell" style="left:746px;width:97px;top:323px;height:21px;background:#ffdfc1;border-color:#e3dad2;overflow:hidden;"><div class="ct" style="color:#000">02.05.2016</div></div>
<div class="cell" style="left:843px;width:97px;top:323px;height:21px;background:#ffdfc1;border-color:#e3dad2;overflow:hidden;"><div class="ct" style="color:#000">09:50</div></div>
<div class="cell" style="left:940px;width:97px;top:323px;height:21px;background:#ffdfc1;border-color:#e3dad2;overflow:hidden;"><div class="ct" style="color:#000">10:00</div></div>
<div class="cell" style="left:1037px;width:97px;top:323px;height:21px;background:#ffdfc1;border-color:#e3dad2;overflow:hidden;"><div class="ct" style="color:#000"><span style="display:inline-block;transform:scaleX(0.89);transform-origin:0 0">DOLU</span></div></div>
<div class="cell" style="left:1134px;width:97px;top:323px;height:21px;background:#ffdfc1;border-color:#e3dad2;overflow:hidden;"><div class="ct" style="color:#000"></div></div>
<div class="cell" style="left:1231px;width:103px;top:323px;height:21px;background:#ffdfc1;border-color:#e3dad2;overflow:hidden;"><div class="ct" style="color:#000">Dahiliye Polk. 6</div></div>
<div class="ab" style="left:1333px;top:176px;width:17px;height:169px;border:1px solid #79b3ee;border-radius:3px;background:linear-gradient(to right,#e6f2fd,#fafdff 45%,#d5eafc 60%,#c5e3fb)"></div>
<div class="ab" style="left:1333px;top:176px;width:17px;height:14px;border:1px solid #79b3ee;border-radius:3px;background:linear-gradient(to right,#eaf4fe,#fafdff 45%,#bfe0fb 55%,#c8e5fc)"></div>
<svg class="ab" style="left:1336px;top:179px" width="11" height="8"><path d="M1.5 6 L5.5 2 L9.5 6" stroke="#1f62c0" stroke-width="2.2" fill="none"/></svg>
<div class="ab" style="left:1333px;top:331px;width:17px;height:14px;border:1px solid #79b3ee;border-radius:3px;background:linear-gradient(to right,#eaf4fe,#fafdff 45%,#bfe0fb 55%,#c8e5fc)"></div>
<svg class="ab" style="left:1336px;top:334px" width="11" height="8"><path d="M1.5 2 L5.5 6 L9.5 2" stroke="#1f62c0" stroke-width="2.2" fill="none"/></svg>
<div class="ab" style="left:1333px;top:193px;width:17px;height:17px;border:1px solid #79b3ee;border-radius:4px;background:linear-gradient(to right,#e2f0fd,#f8fcff 40%,#bde0fb 55%,#c6e4fc)"></div>
<svg class="ab" style="left:1337px;top:197px" width="9" height="8"><path d="M0 1.5H9M0 4H9M0 6.5H9" stroke="#2a68c0" stroke-width="1.1"/></svg>
<div class="grid" style="left:694px;top:396px;width:658px;height:196px"></div>
<div class="hc" style="left:696px;width:50px;border-left:1px solid #a9a9a9;border-top-left-radius:3px;top:398px;height:23px;border-top:1px solid #a9a9a9"><div class="ht">S.N.</div></div>
<div class="hc" style="left:746px;width:100px;top:398px;height:23px;border-top:1px solid #a9a9a9"><div class="ht">Randevu Numarası</div></div>
<div class="hc" style="left:846px;width:100px;top:398px;height:23px;border-top:1px solid #a9a9a9"><div class="ht">Hekim</div></div>
<div class="hc" style="left:946px;width:100px;top:398px;height:23px;border-top:1px solid #a9a9a9"><div class="ht">Tarih</div></div>
<div class="hc" style="left:1046px;width:100px;top:398px;height:23px;border-top:1px solid #a9a9a9"><div class="ht">Kurum</div></div>
<div class="hc" style="left:1146px;width:100px;top:398px;height:23px;border-top:1px solid #a9a9a9"><div class="ht">Klinik</div></div>
<div class="hc" style="left:1246px;width:104px;border-top-right-radius:3px;top:398px;height:23px;border-top:1px solid #a9a9a9"><div class="ht">Durum</div></div>
</body></html>
